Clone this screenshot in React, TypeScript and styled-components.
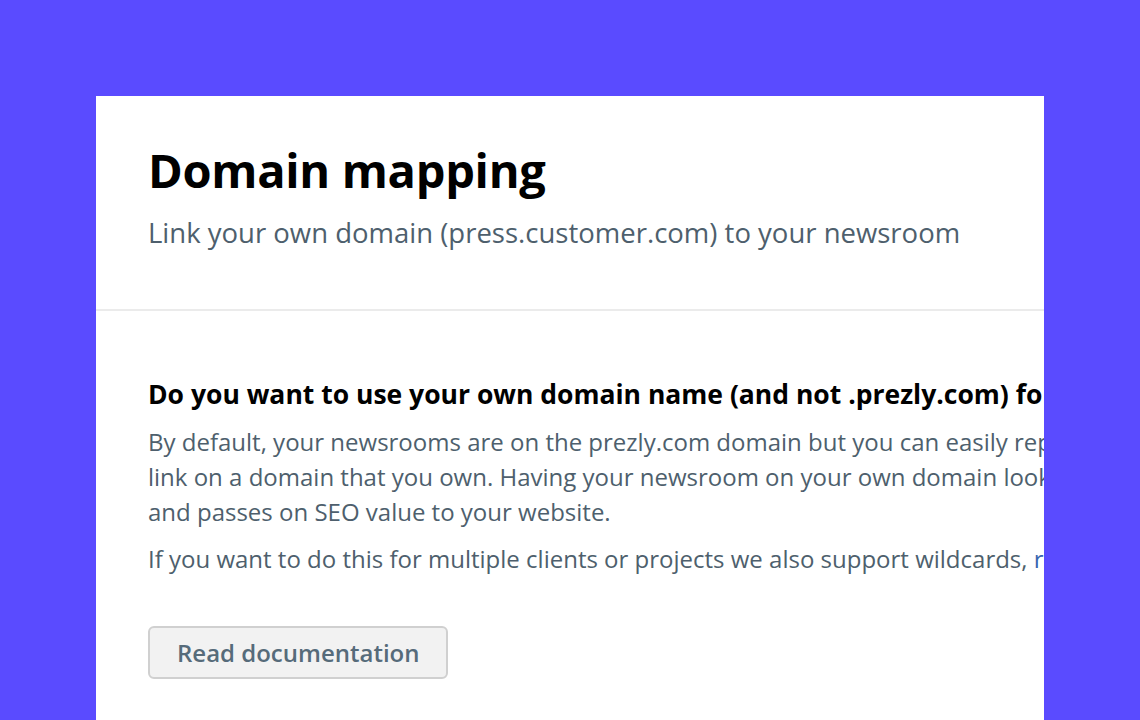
import React from "react";
import styled, { createGlobalStyle } from "styled-components";

const GlobalStyle = createGlobalStyle`
  html, body {
    margin: 0;
    padding: 0;
    background: #5a4bff;
    font-family: "Open Sans", "Liberation Sans", sans-serif;
    -webkit-font-smoothing: antialiased;
  }
`;

const Page = styled.div`
  height: 720px;
  overflow: hidden;
  padding: 96px 96px 0;
  box-sizing: border-box;
`;

const Card = styled.div`
  background: #fff;
  height: 700px;
  overflow: hidden;
`;

const Header = styled.header`
  padding: 42px 52px 56px;
  border-bottom: 2px solid #ebebeb;
`;

const Title = styled.h1`
  margin: 0;
  font-size: 47px;
  font-weight: 700;
  line-height: 64px;
  color: #000;
  letter-spacing: -0.3px;
`;

const Subtitle = styled.p`
  margin: 11px 0 0;
  font-size: 27.5px;
  line-height: 40px;
  color: #4e5f6d;
`;

const Body = styled.section`
  padding: 66px 52px 0;
  width: 1100px;
`;

const Question = styled.h2`
  margin: 0 0 13px;
  font-size: 26.5px;
  font-weight: 700;
  line-height: 34px;
  color: #000;
  white-space: nowrap;
`;

const Text = styled.p`
  margin: 0 0 12px;
  font-size: 24px;
  line-height: 35px;
  color: #4e5f6d;
  white-space: nowrap;
`;

const Link = styled.a`
  color: #3a66b0;
  text-decoration: none;
`;

const Button = styled.button`
  margin-top: 38px;
  height: 53px;
  padding: 0 27px;
  background: #f2f2f2;
  border: 2px solid #d0d0d0;
  border-radius: 6px;
  font-family: inherit;
  font-size: 24px;
  font-weight: 600;
  color: #566b7a;
  cursor: pointer;
`;

export default function App() {
  return (
    <>
      <GlobalStyle />
      <Page>
        <Card>
          <Header>
            <Title>Domain mapping</Title>
            <Subtitle>Link your own domain (press.customer.com) to your newsroom</Subtitle>
          </Header>
          <Body>
            <Question>
              Do you want to use your own domain name (and not .prezly.com) for your newsroom?
            </Question>
            <Text>
              By default, your newsrooms are on the prezly.com domain but you can easily replace the
              <br />
              link on a domain that you own. Having your newsroom on your own domain looks better
              <br />
              and passes on SEO value to your website.
            </Text>
            <Text>
              If you want to do this for multiple clients or projects we also support wildcards,{" "}
              <Link href="#">read more</Link>.
            </Text>
            <Button>Read documentation</Button>
          </Body>
        </Card>
      </Page>
    </>
  );
}
